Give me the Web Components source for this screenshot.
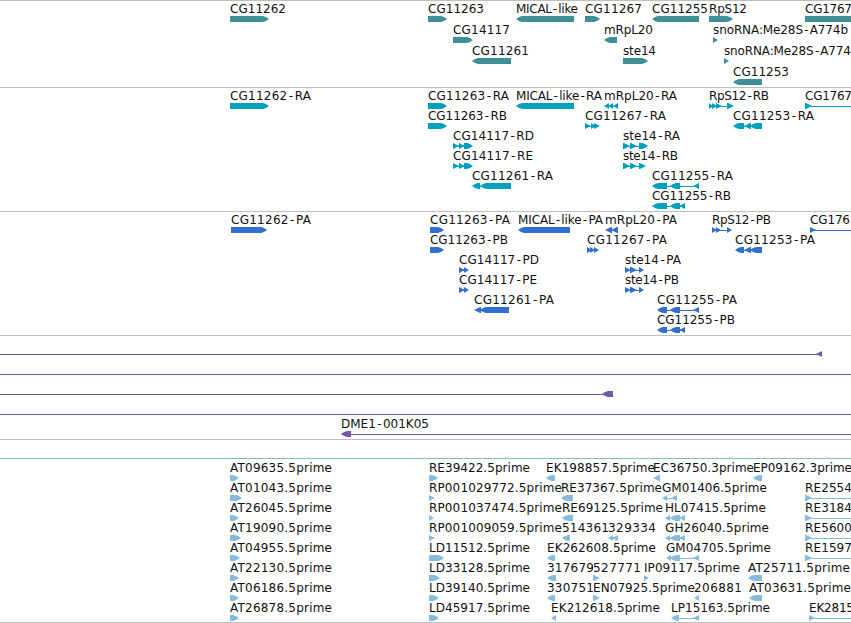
<!DOCTYPE html>
<html lang="en">
<head>
<meta charset="utf-8">
<title>Genome tracks</title>
<style>
  html, body {
    margin: 0;
    background: #fff;
    overflow: hidden;
  }
</style>
</head>
<body>
<genome-browser></genome-browser>

<script>
// feature: [label, start, label width, strand, exons, end of line (optional)]
const estLine = [[805, 812]];
const TRACKS = [
  {
    name: 'gene', color: '#3f8f96', pitch: 21, gap: 2,
    rows: [
      [
        ['CG11262', 230, 56, '+', [[230, 269]]],
        ['CG11263', 428, 56, '+', [[428, 447]]],
        ['MICAL-like', 516, 62, '-', [[516, 574]]],
        ['CG11267', 585, 57, '+', [[585, 600]]],
        ['CG11255', 652, 56, '-', [[652, 699]]],
        ['RpS12', 709, 38, '+', [[709, 733]]],
        ['CG1767', 805, 47, '+', [[805, 870]]]
      ],
      [
        ['CG14117', 453, 57, '+', [[453, 473]]],
        ['mRpL20', 604, 49, '-', [[604, 617]]],
        ['snoRNA:Me28S-A774b', 713, 135, '+', [[713, 718]]]
      ],
      [
        ['CG11261', 472, 57, '-', [[472, 511]]],
        ['ste14', 623, 33, '+', [[623, 648]]],
        ['snoRNA:Me28S-A774', 724, 127, '+', [[724, 729]]]
      ],
      [
        ['CG11253', 733, 56, '-', [[733, 762]]]
      ]
    ]
  },
  {
    name: 'transcript', color: '#009fc0', pitch: 20, gap: 3,
    rows: [
      [
        ['CG11262-RA', 230, 81, '+', [[230, 269]]],
        ['CG11263-RA', 428, 81, '+', [[428, 447]]],
        ['MICAL-like-RA', 516, 86, '-', [[516, 574]]],
        ['mRpL20-RA', 604, 73, '-', [[604, 609], [608, 613], [613, 618]]],
        ['RpS12-RB', 709, 60, '+', [[709, 713], [712, 717], [716, 722], [727, 734]]],
        ['CG1767', 805, 47, '+', [[805, 812]], 870]
      ],
      [
        ['CG11263-RB', 428, 79, '+', [[428, 447]]],
        ['CG11267-RA', 585, 81, '+', [[585, 591], [591, 596], [594, 600]]],
        ['CG11253-RA', 733, 81, '-', [[733, 744], [744, 751], [750, 762]]]
      ],
      [
        ['CG14117-RD', 453, 81, '+', [[453, 459], [459, 465], [464, 473]]],
        ['ste14-RA', 623, 57, '+', [[623, 630], [630, 637], [639, 648]]]
      ],
      [
        ['CG14117-RE', 453, 80, '+', [[453, 459], [459, 465], [464, 473]]],
        ['ste14-RB', 623, 55, '+', [[623, 630], [630, 637], [639, 646]]]
      ],
      [
        ['CG11261-RA', 472, 81, '-', [[472, 480], [480, 511]]],
        ['CG11255-RA', 652, 81, '-', [[652, 667], [670, 680], [693, 699]]]
      ],
      [
        ['CG11255-RB', 652, 79, '-', [[652, 667], [670, 680], [679, 685]]]
      ]
    ]
  },
  {
    name: 'protein', color: '#336fcc', pitch: 20, gap: 3,
    rows: [
      [
        ['CG11262-PA', 231, 80, '+', [[231, 267]]],
        ['CG11263-PA', 430, 80, '+', [[430, 444]]],
        ['MICAL-like-PA', 518, 85, '-', [[518, 570]]],
        ['mRpL20-PA', 605, 72, '-', [[605, 612], [611, 618]]],
        ['RpS12-PB', 712, 59, '+', [[712, 717], [716, 721], [727, 732]]],
        ['CG176', 810, 40, '+', [[810, 816]], 870]
      ],
      [
        ['CG11263-PB', 430, 78, '+', [[430, 444]]],
        ['CG11267-PA', 587, 80, '+', [[587, 592], [590, 595], [594, 599]]],
        ['CG11253-PA', 735, 80, '-', [[735, 744], [744, 751], [750, 762]]]
      ],
      [
        ['CG14117-PD', 459, 80, '+', [[459, 465], [464, 469]]],
        ['ste14-PA', 625, 56, '+', [[625, 631], [630, 637], [639, 644]]]
      ],
      [
        ['CG14117-PE', 459, 78, '+', [[459, 465], [464, 469]]],
        ['ste14-PB', 625, 54, '+', [[625, 631], [630, 637], [639, 644]]]
      ],
      [
        ['CG11261-PA', 474, 80, '-', [[474, 481], [480, 509]]],
        ['CG11255-PA', 657, 80, '-', [[657, 667], [670, 680], [693, 699]]]
      ],
      [
        ['CG11255-PB', 657, 78, '-', [[657, 667], [670, 680], [679, 685]]]
      ]
    ]
  },
  {
    name: 'bac', color: '#7359a6', pitch: 20, gap: 3,
    rows: [
      [['', 0, 0, '-', [[816, 822]]]],
      [['', 0, 0, '-', [], 870]],
      [['', 0, 0, '-', [[602, 613]]]],
      [['', 0, 0, '-', [], 870]],
      [['DME1-001K05', 341, 88, '-', [[341, 351]], 870]]
    ]
  },
  {
    name: 'est', color: '#87bbdc', pitch: 20, gap: 2,
    rows: [
      [['', 0, 0, '+', [], 870]],
      [
        ['AT09635.5prime', 230, 102, '+', [[230, 239]]],
        ['RE39422.5prime', 429, 101, '+', [[429, 438]]],
        ['EK198857.5prime', 546, 109, '-', [[546, 555]]],
        ['EC36750.3prime', 653, 101, '-', [[653, 660]]],
        ['EP09162.3prime', 753, 99, '-', [[753, 762]]]
      ],
      [
        ['AT01043.5prime', 230, 102, '+', [[230, 242]]],
        ['RP001029772.5prime', 429, 133, '+', [[429, 435]]],
        ['RE37367.5prime', 561, 101, '-', [[561, 573]]],
        ['GM01406.5prime', 662, 105, '-', [[662, 667], [671, 677]]],
        ['RE2554', 805, 47, '+', estLine, 870]
      ],
      [
        ['AT26045.5prime', 230, 102, '+', [[230, 239]]],
        ['RP001037474.5prime', 429, 133, '+', [[429, 434]]],
        ['RE69125.5prime', 562, 101, '-', [[562, 573]]],
        ['HL07415.5prime', 665, 101, '-', [[665, 670], [670, 680], [679, 685]]],
        ['RE3184', 805, 47, '+', estLine, 870]
      ],
      [
        ['AT19090.5prime', 230, 102, '+', [[230, 241]]],
        ['RP001009059.5prime', 429, 133, '+', [[429, 435]]],
        ['514361', 562, 47, '-', [[562, 570]]],
        ['329334', 608, 48, '-', [[608, 613], [612, 618]]],
        ['GH26040.5prime', 665, 104, '-', [[665, 670], [670, 680], [679, 685]]],
        ['RE5600', 805, 47, '+', estLine, 870]
      ],
      [
        ['AT04955.5prime', 230, 102, '+', [[230, 240]]],
        ['LD11512.5prime', 429, 101, '+', [[429, 444]]],
        ['EK262608.5prime', 547, 109, '-', [[547, 555]]],
        ['GM04705.5prime', 666, 105, '-', [[666, 671], [670, 680], [693, 699]]],
        ['RE1597', 805, 47, '+', estLine, 870]
      ],
      [
        ['AT22130.5prime', 230, 102, '+', [[230, 239]]],
        ['LD33128.5prime', 429, 101, '+', [[429, 440]]],
        ['317679', 547, 47, '-', [[547, 556]]],
        ['527771', 593, 48, '+', [[593, 600]]],
        ['IP09117.5prime', 644, 96, '+', [[644, 649]]],
        ['AT25711.5prime', 748, 102, '-', [[748, 762]]]
      ],
      [
        ['AT06186.5prime', 230, 102, '+', [[230, 239]]],
        ['LD39140.5prime', 429, 101, '+', [[429, 439]]],
        ['330751', 547, 47, '-', [[547, 555]]],
        ['EN07925.5prime', 593, 102, '+', [[593, 600]]],
        ['206881', 694, 48, '-', [[694, 699]]],
        ['AT03631.5prime', 749, 102, '-', [[749, 762]]]
      ],
      [
        ['AT26878.5prime', 230, 102, '+', [[230, 239]]],
        ['LD45917.5prime', 429, 101, '+', [[429, 439]]],
        ['EK212618.5prime', 551, 109, '-', [[551, 556]]],
        ['LP15163.5prime', 671, 99, '-', [[671, 679], [693, 699]]],
        ['EK2815', 809, 45, '+', [[809, 815]], 870]
      ]
    ]
  }
];

// One exon: a 6px bar with a tapered head pointing along the strand
function exonPoints(a, b, strand) {
  const w = b - a;
  const head = Math.min(w, 6);
  const shoulder = w > 7 ? 3 : 0;
  let pts;
  if (shoulder) {
    pts = [[0, 0], [w - head, 0], [w - shoulder, 1], [w, 3], [w - shoulder, 5], [w - head, 6], [0, 6]];
  } else {
    pts = [[0, 0], [w - head, 0], [w, 3], [w - head, 6], [0, 6]];
  }
  return pts.map(([x, y]) => (strand === '+' ? a + x : b - x) + ',' + (15 + y)).join(' ');
}

// Extra room on both sides of a hyphen
function hyphenShift(label) {
  return [...label]
    .map((c, i) => (c === '-' || label[i - 1] === '-' ? 1.4 : 0))
    .join(' ');
}

class GenomeFeature extends HTMLElement {
  constructor() {
    super();
    this.attachShadow({ mode: 'open' });
  }

  set data([label, start, width, strand, exons, lineEnd]) {
    const last = exons.length ? exons[exons.length - 1][1] - 4 : start;
    const end = lineEnd || last;
    const lineStart = strand === '-' || !exons.length ? start + (exons.length && label ? 4 : 0) : exons[0][0];
    const hasLine = lineEnd || exons.length > 1 || !label;
    const line = hasLine
      ? `<rect x="${lineStart - start}" y="18" width="${end - lineStart}" height="1" shape-rendering="crispEdges"/>`
      : '';
    const shapes = exons
      .map(([a, b]) => `<polygon points="${exonPoints(a - start, b - start, strand)}"/>`)
      .join('');
    const dx = label.includes('-') ? `dx="${hyphenShift(label)}"` : '';
    const text = label
      ? `<text x="0" y="12" ${dx} textLength="${width}" lengthAdjust="spacing">${label}</text>`
      : '';

    this.style.setProperty('--start', start + 'px');
    this.shadowRoot.innerHTML = `
      <style>
        :host {
          display: block;
          grid-area: 1 / 1;
          margin-left: var(--start);
          width: 0;
          height: 100%;
        }
        svg {
          display: block;
          width: 1px;
          height: 21px;
          overflow: visible;
          fill: var(--track-color);
        }
        text {
          fill: #111;
          font: 12px "DejaVu Sans", "Liberation Sans", sans-serif;
        }
      </style>
      <svg>${line}${shapes}${text}</svg>`;
  }
}
customElements.define('genome-feature', GenomeFeature);

class GenomeTrack extends HTMLElement {
  constructor() {
    super();
    this.attachShadow({ mode: 'open' });
    this.shadowRoot.innerHTML = `
      <style>
        :host {
          display: flex;
          flex-direction: column;
          border-top: 1px solid #bebebe;
          padding-bottom: var(--gap);
        }
        .row {
          display: grid;
          height: var(--pitch);
        }
      </style>`;
  }

  set data(track) {
    this.style.setProperty('--track-color', track.color);
    this.style.setProperty('--pitch', track.pitch + 'px');
    this.style.setProperty('--gap', track.gap + 'px');
    for (const features of track.rows) {
      const row = document.createElement('div');
      row.className = 'row';
      for (const f of features) {
        const feature = document.createElement('genome-feature');
        feature.data = f;
        row.appendChild(feature);
      }
      this.shadowRoot.appendChild(row);
    }
  }
}
customElements.define('genome-track', GenomeTrack);

class GenomeBrowser extends HTMLElement {
  constructor() {
    super();
    this.attachShadow({ mode: 'open' });
    this.shadowRoot.innerHTML = `
      <style>
        :host {
          display: flex;
          flex-direction: column;
          box-sizing: border-box;
          width: 851px;
          height: 623px;
          overflow: hidden;
          background: #fff;
          border-bottom: 1px solid #bebebe;
        }
      </style>`;
    for (const t of TRACKS) {
      const track = document.createElement('genome-track');
      track.id = t.name;
      track.data = t;
      this.shadowRoot.appendChild(track);
    }
  }
}
customElements.define('genome-browser', GenomeBrowser);
</script>
</body>
</html>
